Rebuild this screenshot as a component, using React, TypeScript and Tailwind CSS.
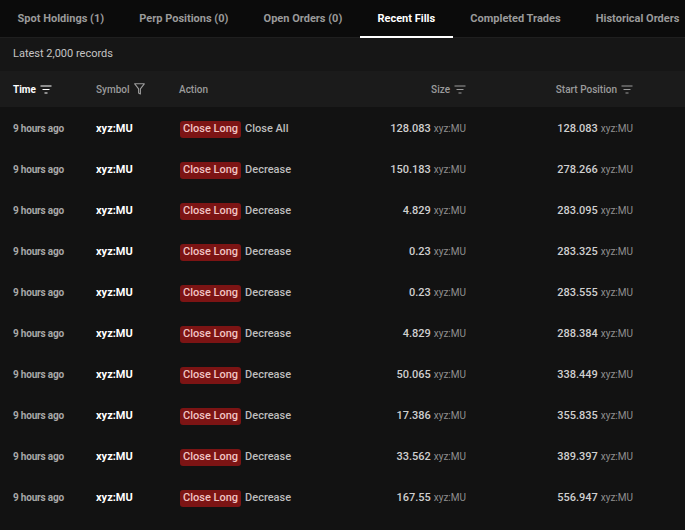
import React from "react";

type Fill = {
  time: string;
  symbol: string;
  side: string;
  dir: string;
  size: string;
  start: string;
};

const fills: Fill[] = [
  { time: "9 hours ago", symbol: "xyz:MU", side: "Close Long", dir: "Close All", size: "128.083", start: "128.083" },
  { time: "9 hours ago", symbol: "xyz:MU", side: "Close Long", dir: "Decrease", size: "150.183", start: "278.266" },
  { time: "9 hours ago", symbol: "xyz:MU", side: "Close Long", dir: "Decrease", size: "4.829", start: "283.095" },
  { time: "9 hours ago", symbol: "xyz:MU", side: "Close Long", dir: "Decrease", size: "0.23", start: "283.325" },
  { time: "9 hours ago", symbol: "xyz:MU", side: "Close Long", dir: "Decrease", size: "0.23", start: "283.555" },
  { time: "9 hours ago", symbol: "xyz:MU", side: "Close Long", dir: "Decrease", size: "4.829", start: "288.384" },
  { time: "9 hours ago", symbol: "xyz:MU", side: "Close Long", dir: "Decrease", size: "50.065", start: "338.449" },
  { time: "9 hours ago", symbol: "xyz:MU", side: "Close Long", dir: "Decrease", size: "17.386", start: "355.835" },
  { time: "9 hours ago", symbol: "xyz:MU", side: "Close Long", dir: "Decrease", size: "33.562", start: "389.397" },
  { time: "9 hours ago", symbol: "xyz:MU", side: "Close Long", dir: "Decrease", size: "167.55", start: "556.947" },
];

const tabs = [
  "Spot Holdings (1)",
  "Perp Positions (0)",
  "Open Orders (0)",
  "Recent Fills",
  "Completed Trades",
  "Historical Orders",
];

const SortIcon = () => (
  <svg width="12" height="9" viewBox="0 0 12 9" className="ml-[4px]" fill="none" stroke="currentColor" strokeWidth="1.2">
    <path d="M0.5 1h11M2.5 4.5h7M4.5 8h3" />
  </svg>
);

const FunnelIcon = () => (
  <svg width="11" height="12" viewBox="0 0 11 12" className="ml-[4px]" fill="none" stroke="currentColor" strokeWidth="1.1">
    <path d="M0.7 0.8h9.6L6.4 5.8v5.2L4.6 10V5.8z" strokeLinejoin="round" />
  </svg>
);

// time | symbol | action | size | start position | spare
const cols = "grid grid-cols-[83px_83px_120px_167px_167px_1fr] items-center pl-[13px]";

export default function App() {
  const active = "Recent Fills";
  return (
    <div
      className="w-[685px] h-[530px] overflow-hidden bg-[#121212] text-[#c8c8c8]"
      style={{ fontFamily: "Roboto, 'Liberation Sans', sans-serif" }}
    >
      {/* tab strip */}
      <div className="flex h-[38px] pt-[2px] bg-[#0b0b0b] border-b border-[#1f1f1f] whitespace-nowrap">
        {tabs.map((t) => (
          <div
            key={t}
            className={
              t === active
                ? "relative flex items-center px-[17.6px] text-[11px] font-bold text-white"
                : "relative flex items-center px-[17.6px] text-[11px] font-bold text-[#9a9a9a]"
            }
          >
            {t}
            {t === active && (
              <span className="absolute left-0 right-0 bottom-[-1px] h-[2px] bg-white" />
            )}
          </div>
        ))}
      </div>

      <div className="h-[33px] flex items-center pl-[13px] pb-[1px] bg-[#161616] text-[11px] text-[#c4c4c4]">
        Latest 2,000 records
      </div>

      {/* column headers */}
      <div className={`${cols} h-[36px] bg-[#1b1b1b] text-[10px] font-medium text-[#9c9c9c]`}>
        <div className="flex items-center text-white font-bold">
          Time
          <SortIcon />
        </div>
        <div className="flex items-center">
          Symbol
          <FunnelIcon />
        </div>
        <div>Action</div>
        <div className="flex items-center justify-end">
          Size
          <SortIcon />
        </div>
        <div className="flex items-center justify-end">
          Start Position
          <SortIcon />
        </div>
      </div>

      <div className="pt-[2px]">
        {fills.map((f, i) => (
          <div key={i} className={`${cols} h-[41px]`}>
            <div className="text-[10px] font-bold text-[#a8a8a8] tracking-[-0.2px] pb-[2px]">{f.time}</div>
            <div className="text-[11px] font-bold text-white">{f.symbol}</div>
            <div className="flex items-center whitespace-nowrap text-[11px] font-medium">
              <span className="ml-[1px] rounded-[3px] bg-[#7c1414] px-[3px] pt-[1px] pb-[3px] leading-[13px] text-[#f1c4c4]">
                {f.side}
              </span>
              <span className="ml-[4px] text-[#bdbdbd]">{f.dir}</span>
            </div>
            <div className="flex items-baseline justify-end whitespace-nowrap">
              <span className="text-[11px] font-medium text-[#cfcfcf]">{f.size}</span>
              <span className="ml-[3px] text-[10px] text-[#8f8f8f]">{f.symbol}</span>
            </div>
            <div className="flex items-baseline justify-end whitespace-nowrap">
              <span className="text-[11px] font-medium text-[#cfcfcf]">{f.start}</span>
              <span className="ml-[3px] text-[10px] text-[#8f8f8f]">{f.symbol}</span>
            </div>
          </div>
        ))}
      </div>
    </div>
  );
}
